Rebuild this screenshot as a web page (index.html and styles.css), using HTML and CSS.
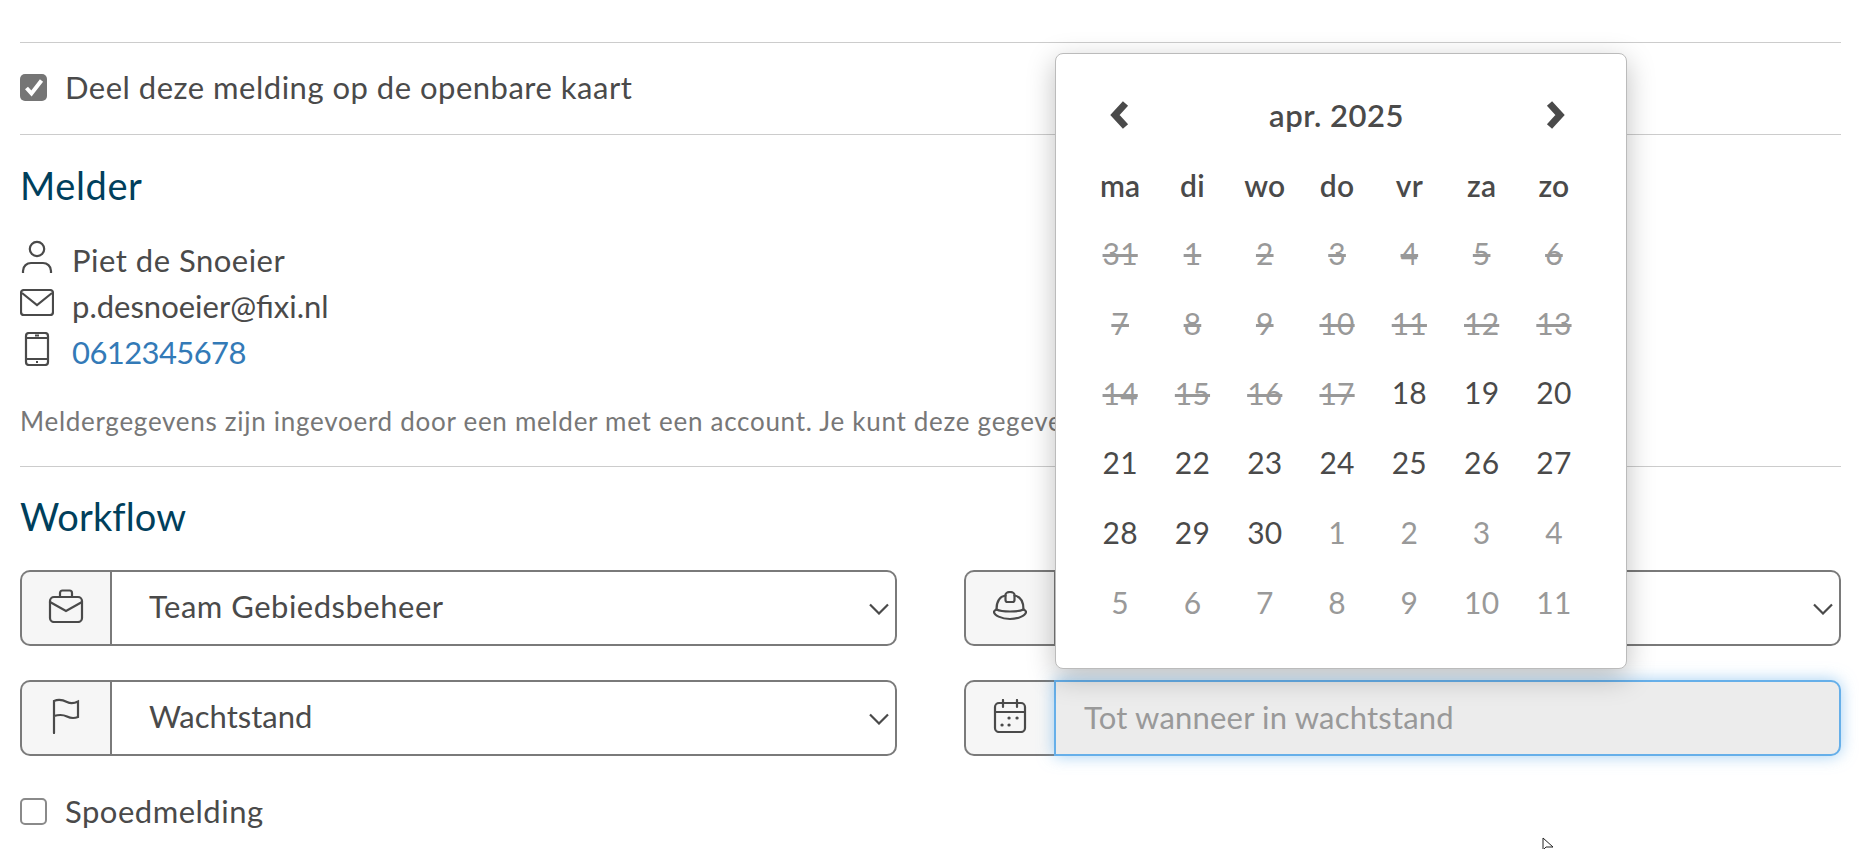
FILE: index.html
```html
<!DOCTYPE html>
<html lang="nl">
<head>
<meta charset="utf-8">
<title>Melding</title>
<link rel="stylesheet" href="styles.css">
</head>
<body>
<main class="page">
  <section class="share">
    <label class="check">
      <span class="box box-on"><svg viewBox="0 0 26 26" width="26" height="26"><path d="M5.500 14l5 5.500 10-13" fill="none" stroke="#fff" stroke-width="4"/></svg></span>
      <span>Deel deze melding op de openbare kaart</span>
    </label>
  </section>
  <section class="reporter">
    <h2>Melder</h2>
    <ul class="contact">
      <li><svg class="ci" viewBox="0 0 34 34" width="34" height="34"><circle cx="17" cy="9" r="7.200"/><path d="M3 33v-2c0-5 4-8 8-8h12c4 0 8 3 8 8v2"/></svg><span>Piet de Snoeier</span></li>
      <li><svg class="ci" viewBox="0 0 34 28" width="34" height="28"><rect x="1" y="1" width="32" height="25" rx="3"/><path d="M2 4l15 12L32 4"/></svg><span class="narrow">p.desnoeier@fixi.nl</span></li>
      <li><svg class="ci" viewBox="0 0 34 34" width="34" height="34"><rect x="6" y="1" width="22" height="32" rx="3"/><path d="M6 6h22M6 27h22M15 3.500h4M16 30h2"/></svg><a class="digits" href="#">0612345678</a></li>
    </ul>
    <p class="note">Meldergegevens zijn ingevoerd door een melder met een account. Je kunt deze gegeve</p>
  </section>
  <section class="workflow">
    <h2 class="tight">Workflow</h2>
    <div class="fields">
      <div class="field">
        <span class="addon"><svg class="fi" viewBox="0 0 36 34" width="36" height="34"><path d="M12 8V4c0-1.500 1-2.500 2.500-2.500h7C23 1.500 24 2.500 24 4v4"/><rect x="2" y="8" width="32" height="25" rx="4"/><path d="M2 13l16 9 16-9"/></svg></span>
        <div class="select"><span>Team Gebiedsbeheer</span><svg class="chev" viewBox="0 0 20 12" width="20" height="12"><path d="M1 1.500l9 9 9-9"/></svg></div>
      </div>
      <div class="field">
        <span class="addon"><svg class="fi" viewBox="0 0 34 30" width="34" height="30"><path d="M12.500 4v5a2 2 0 0 0 2 2h5a2 2 0 0 0 2-2V4M12.500 4a4.500 3 0 0 1 9 0"/><path d="M12.500 4.500C7 5.500 3.500 10 3.500 18.500M21.500 4.500C27 5.500 30.500 10 30.500 18.500"/><path d="M3.500 18.500C2 19 1 20 1 21c0 3 7 7 16 7s16-4 16-7c0-1-1-2-2.500-2.500"/><path d="M3.500 18.500c3 1.500 8 2 13.500 2s10.500-.5 13.500-2"/></svg></span>
        <div class="select"><span></span><svg class="chev" viewBox="0 0 20 12" width="20" height="12"><path d="M1 1.500l9 9 9-9"/></svg></div>
      </div>
      <div class="field">
        <span class="addon"><svg class="fi" viewBox="0 0 30 36" width="30" height="36"><path d="M3 35V3c6-2.500 10-.5 13 1s7 1.500 11-.5V19c-5 2-8 1-11-.5S8 16.500 3 18"/></svg></span>
        <div class="select"><span class="narrow">Wachtstand</span><svg class="chev" viewBox="0 0 20 12" width="20" height="12"><path d="M1 1.500l9 9 9-9"/></svg></div>
      </div>
      <div class="field">
        <span class="addon"><svg class="fi" viewBox="0 0 34 34" width="34" height="34"><rect x="2" y="4" width="30" height="29" rx="4"/><path d="M2 13h30M10 1v7M24 1v7"/><path class="dots" d="M16 19h.1M24 19h.1M9 26h.1M16 26h.1"/></svg></span>
        <div class="input">Tot wanneer in wachtstand</div>
      </div>
    </div>
    <label class="check urgent">
      <span class="box"></span>
      <span>Spoedmelding</span>
    </label>
  </section>
</main>

<aside class="calendar">
  <header class="cal-head">
    <svg class="arrow" viewBox="0 0 22 30" width="22" height="30"><path d="M15.500 3.500L5 15l10.500 11.500"/></svg>
    <strong>apr. 2025</strong>
    <svg class="arrow" viewBox="0 0 22 30" width="22" height="30"><path d="M6.500 3.500L17 15 6.500 26.500"/></svg>
  </header>
  <div class="cal-grid">
    <b>ma</b><b>di</b><b>wo</b><b>do</b><b>vr</b><b>za</b><b>zo</b>
    <s>31</s><s>1</s><s>2</s><s>3</s><s>4</s><s>5</s><s>6</s>
    <s>7</s><s>8</s><s>9</s><s>10</s><s>11</s><s>12</s><s>13</s>
    <s>14</s><s>15</s><s>16</s><s>17</s><span>18</span><span>19</span><span>20</span>
    <span>21</span><span>22</span><span>23</span><span>24</span><span>25</span><span>26</span><span>27</span>
    <span>28</span><span>29</span><span>30</span><i>1</i><i>2</i><i>3</i><i>4</i>
    <i>5</i><i>6</i><i>7</i><i>8</i><i>9</i><i>10</i><i>11</i>
  </div>
</aside>

<svg class="cursor" viewBox="0 0 12 16" width="12" height="16"><path d="M1 1v12l3-3h7z"/></svg>
</body>
</html>
```
FILE: styles.css
```css
* { box-sizing: border-box; }
html, body { margin: 0; height: 100%; overflow: hidden; background: #fff; }
body {
  font-family: Lato, "Open Sans", sans-serif;
  font-size: 31px;
  letter-spacing: .5px;
  color: #4a4a4a;
  position: relative;
}
.page { padding: 42px 18px 0 20px; }
section { border-top: 1.5px solid #ccc; }
.narrow { letter-spacing: 0; }
.digits { letter-spacing: -.6px; }

.share { height: 92px; padding-top: 22px; }
.check { display: flex; align-items: center; gap: 18px; line-height: 44px; }
.box {
  width: 27px; height: 27px; flex: none;
  border: 2px solid #7a7a7a; border-radius: 5px; background: #fff;
  display: flex; align-items: center; justify-content: center;
}
.box-on { background: #757575; border: 0; }

h2 { margin: 0; font-size: 38px; font-weight: 400; line-height: 50px; color: #003f5c; letter-spacing: .6px; }
h2.tight { letter-spacing: .1px; }

.reporter { height: 332px; padding-top: 25px; }
.contact { list-style: none; margin: 27px 0 0; padding: 0; }
.contact li { display: flex; align-items: center; height: 46px; }
.contact li span, .contact li a { margin-left: 18px; }
.ci { flex: none; fill: none; stroke: #4a4a4a; stroke-width: 2.200; margin-top: -6px; }
a { color: #337ab7; text-decoration: none; }
.note { margin: 30px 0 0; font-size: 26px; color: #777; white-space: nowrap; line-height: 32px; letter-spacing: .72px; }

.workflow { padding-top: 24px; }
.fields { display: grid; grid-template-columns: 877px 877px; column-gap: 67px; row-gap: 34px; margin-top: 29px; }
.field { display: flex; height: 76px; }
.addon {
  width: 90px; flex: none;
  display: flex; align-items: center; justify-content: center;
  background: #f6f6f6;
  border: 2px solid #7a7a7a; border-right: 0;
  border-radius: 10px 0 0 10px;
}
.fi { fill: none; stroke: #4a4a4a; stroke-width: 2.200; margin-top: -4px; stroke-linecap: round; }
.dots { stroke-width: 3.200; }
.select {
  flex: 1;
  display: flex; align-items: center; justify-content: space-between;
  border: 2px solid #7a7a7a; border-radius: 0 10px 10px 0;
  padding: 0 6px 4px 37px;
}
.chev { fill: none; stroke: #4a4a4a; stroke-width: 2.200; margin-top: 6px; }
.input {
  flex: 1;
  display: flex; align-items: center;
  background: #ececec;
  border: 2px solid #66afe9; border-radius: 0 10px 10px 0;
  box-shadow: 0 0 16px rgba(102, 175, 233, .6);
  padding: 0 28px 2px;
  color: #999;
  letter-spacing: .2px;
}
.urgent { margin-top: 33px; }
.urgent .box { border-color: #8a8a8a; }

.calendar {
  position: absolute; left: 1055px; top: 53px;
  width: 572px; height: 616px;
  background: #fff;
  border: 1px solid #bbb; border-radius: 8px;
  box-shadow: 0 8px 28px rgba(0, 0, 0, .25);
  padding: 28px 36px 0 28px;
}
.cal-head { display: flex; align-items: center; justify-content: space-between; height: 66px; padding: 0 25px 0 26px; }
.cal-head strong { font-weight: 600; font-size: 31px; margin-left: -2px; letter-spacing: .5px; }
.arrow { fill: none; stroke: #4a4a4a; stroke-width: 7; }
.cal-grid { display: grid; grid-template-columns: repeat(7, 72.3px); grid-auto-rows: 70px; margin-top: -1px; }
.cal-grid > * { display: flex; align-items: center; justify-content: center; font-style: normal; letter-spacing: .2px; font-size: 30px; }
.cal-grid b { font-weight: 600; padding-top: 6px; }
.cal-grid s { color: #999; text-decoration: line-through; display: block; text-align: center; line-height: 70px; padding-top: 1px; }
.cal-grid i { color: #999; }

.cursor { position: absolute; left: 1542px; top: 837px; fill: #fff; stroke: #222; stroke-width: 1; }
```
